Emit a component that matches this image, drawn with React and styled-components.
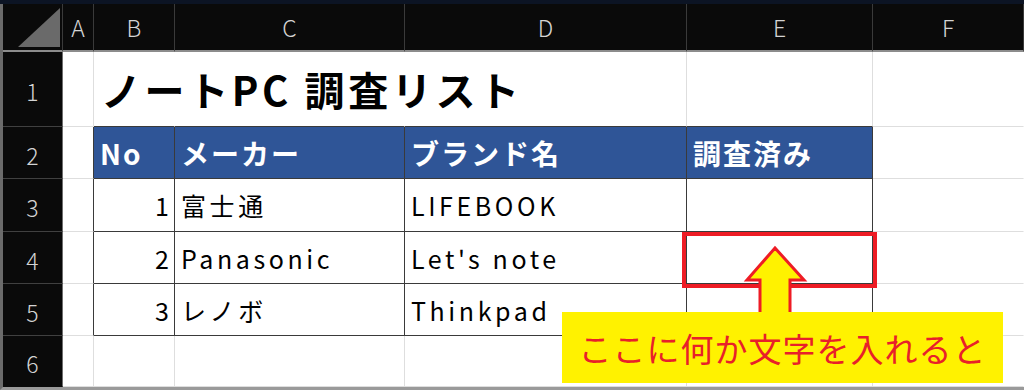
import React from "react";
import styled, { createGlobalStyle } from "styled-components";

const GlobalStyle = createGlobalStyle`
  html, body {
    margin: 0;
    padding: 0;
    background: #fff;
  }
  body {
    font-family: "Noto Sans CJK JP", "Noto Sans", sans-serif;
  }
`;

const COLUMNS = ["A", "B", "C", "D", "E", "F"];
const ROW_HEIGHTS = [75, 52, 53, 52, 52, 51];

const DARK = "#3a3a3a";
const GRID = "#dedede";

const ROWS = [
  [{}, { text: "ノートPC 調査リスト", kind: "title" }, {}, {}, {}, {}],
  [
    {},
    { text: "No", kind: "head" },
    { text: "メーカー", kind: "head" },
    { text: "ブランド名", kind: "head" },
    { text: "調査済み", kind: "head" },
    {},
  ],
  [{}, { text: "1", kind: "num" }, { text: "富士通" }, { text: "LIFEBOOK" }, {}, {}],
  [{}, { text: "2", kind: "num" }, { text: "Panasonic" }, { text: "Let's note" }, {}, {}],
  [{}, { text: "3", kind: "num" }, { text: "レノボ" }, { text: "Thinkpad" }, {}, {}],
  [{}, {}, {}, {}, {}, {}],
];

// rows 1..4 (0-based) and columns B..E make up the bordered table
const inTable = (r, c) => r >= 1 && r <= 4 && c >= 1 && c <= 4;

const TEXT = {
  title: { size: "40px", weight: 700, spacing: "3.6px" },
  head: { size: "28px", weight: 700, spacing: "2px" },
  num: { size: "25px", weight: 400, spacing: "0" },
  text: { size: "25px", weight: 400, spacing: "3.6px" },
};

const Page = styled.div`
  position: relative;
  width: 1024px;
  height: 390px;
  overflow: hidden;
  background: #0c1424;
  padding-top: 4px;
  box-sizing: border-box;
`;

const Sheet = styled.div`
  display: grid;
  grid-template-columns: 60px 31px 81px 230px 282px 186px 1fr;
  grid-template-rows: 48px ${ROW_HEIGHTS.map((h) => `${h}px`).join(" ")};
  background: #fff;
  border-left: 3px solid #6b6b6b;
  border-bottom: 3px solid #9a9a9a;
  height: 386px;
  box-sizing: border-box;
`;

const Corner = styled.div`
  position: relative;
  background: #0a0a0a;
  border-right: 1px solid ${DARK};
  border-bottom: 2px solid #8c8c8c;

  &::after {
    content: "";
    position: absolute;
    left: 15px;
    right: 2px;
    top: 4px;
    bottom: 3px;
    background: #6a6a6a;
    clip-path: polygon(100% 0, 100% 100%, 0 100%);
  }
`;

const ColHead = styled.div`
  background: #0a0a0a;
  color: #d4d4d4;
  font-size: 23px;
  font-weight: 300;
  display: flex;
  align-items: center;
  justify-content: center;
  border-right: 1px solid ${DARK};
  border-bottom: 2px solid #8c8c8c;
`;

const RowHead = styled.div`
  background: #0a0a0a;
  color: #d4d4d4;
  font-size: 23px;
  font-weight: 300;
  display: flex;
  align-items: center;
  justify-content: center;
  padding-top: 4px;
  box-sizing: border-box;
  border-right: 1px solid #6e6e6e;
  border-bottom: 1px solid ${(p) => (p.$last ? "transparent" : "#404040")};
`;

const Cell = styled.div`
  display: flex;
  align-items: center;
  justify-content: ${(p) => (p.$kind === "num" ? "flex-end" : "flex-start")};
  min-width: 0;
  white-space: nowrap;
  overflow: visible;
  box-sizing: border-box;
  padding: 0 ${(p) => (p.$kind === "num" ? "5px" : "0")} 0
    ${(p) => (p.$kind === "title" ? "7px" : "6px")};
  background: ${(p) => (p.$kind === "head" ? "#2f5597" : "transparent")};
  color: ${(p) => (p.$kind === "head" ? "#fff" : "#000")};
  font-size: ${(p) => TEXT[p.$kind || "text"].size};
  font-weight: ${(p) => TEXT[p.$kind || "text"].weight};
  letter-spacing: ${(p) => TEXT[p.$kind || "text"].spacing};
  border-right: 1px solid ${(p) => p.$right};
  border-bottom: 1px solid ${(p) => p.$bottom};
  position: relative;
  z-index: ${(p) => (p.$kind === "title" ? 1 : 0)};
`;

const RedFrame = styled.div`
  position: absolute;
  left: 682px;
  top: 232px;
  width: 195px;
  height: 56px;
  box-sizing: border-box;
  border: 4px solid #ee1c25;
  z-index: 2;
`;

const Arrow = styled.svg`
  position: absolute;
  left: 740px;
  top: 240px;
  z-index: 3;
`;

const Callout = styled.div`
  position: absolute;
  left: 562px;
  top: 312px;
  width: 441px;
  height: 71px;
  background: #fff200;
  color: #e8202a;
  font-size: 33px;
  letter-spacing: 1px;
  display: flex;
  align-items: center;
  justify-content: center;
  z-index: 4;
`;

const cellBorders = (r, c, cell) => {
  const last = c === COLUMNS.length - 1;
  let right = inTable(r, c) || inTable(r, c + 1) ? DARK : GRID;
  if (last && !inTable(r, c)) right = "transparent";
  // the title overflows B1..D1, so those gridlines are hidden
  if (r === 0 && (c === 1 || c === 2)) right = "transparent";
  const bottom = inTable(r, c) || inTable(r + 1, c) ? DARK : GRID;
  return { right, bottom, kind: cell.kind };
};

export default function App() {
  return (
    <Page>
      <GlobalStyle />
      <Sheet>
        <Corner />
        {COLUMNS.map((col) => (
          <ColHead key={col}>{col}</ColHead>
        ))}
        {ROWS.map((row, r) => (
          <React.Fragment key={r}>
            <RowHead $last={r === ROWS.length - 1}>{r + 1}</RowHead>
            {row.map((cell, c) => {
              const b = cellBorders(r, c, cell);
              return (
                <Cell key={c} $right={b.right} $bottom={b.bottom} $kind={b.kind}>
                  {cell.text}
                </Cell>
              );
            })}
          </React.Fragment>
        ))}
      </Sheet>

      <RedFrame />
      <Arrow width="72" height="80" viewBox="740 240 72 80">
        <polygon
          points="775,248 804,280 790,280 790,318 760,318 760,280 747,280"
          fill="#fff200"
          stroke="#ee1c25"
          strokeWidth="3"
          strokeLinejoin="miter"
        />
      </Arrow>
      <Callout>ここに何か文字を入れると</Callout>
    </Page>
  );
}
